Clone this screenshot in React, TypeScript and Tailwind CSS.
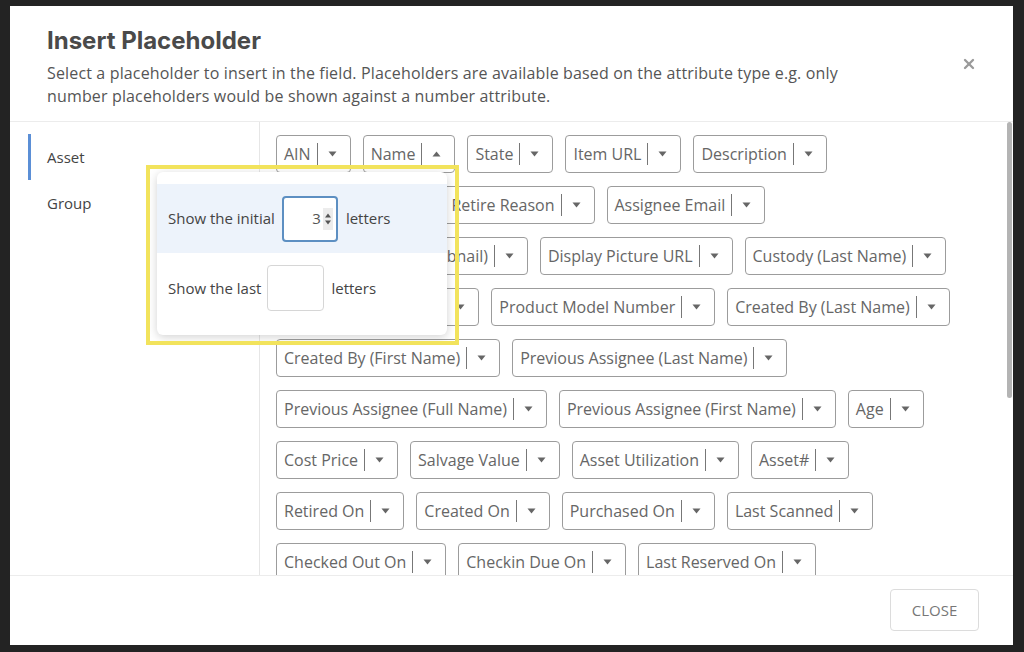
import { X } from 'lucide-react'

const rows: { label: string; open?: boolean }[][] = [
  [{ label: 'AIN' }, { label: 'Name', open: true }, { label: 'State' }, { label: 'Item URL' }, { label: 'Description' }],
  [{ label: 'Serial Number' }, { label: 'Retire Reason' }, { label: 'Assignee Email' }],
  [{ label: 'Display Picture (Thumbnail)' }, { label: 'Display Picture URL' }, { label: 'Custody (Last Name)' }],
  [{ label: 'Custody (First Name)' }, { label: 'Product Model Number' }, { label: 'Created By (Last Name)' }],
  [{ label: 'Created By (First Name)' }, { label: 'Previous Assignee (Last Name)' }],
  [{ label: 'Previous Assignee (Full Name)' }, { label: 'Previous Assignee (First Name)' }, { label: 'Age' }],
  [{ label: 'Cost Price' }, { label: 'Salvage Value' }, { label: 'Asset Utilization' }, { label: 'Asset#' }],
  [{ label: 'Retired On' }, { label: 'Created On' }, { label: 'Purchased On' }, { label: 'Last Scanned' }],
  [{ label: 'Checked Out On' }, { label: 'Checkin Due On' }, { label: 'Last Reserved On' }],
]

function Caret({ up }: { up?: boolean }) {
  return (
    <svg width="9" height="6" viewBox="0 0 9 6" className="ml-[10px]">
      {up ? <path d="M0.5 5.5 L4.5 0.5 L8.5 5.5 Z" fill="#666" /> : <path d="M0.5 0.5 L8.5 0.5 L4.5 5.5 Z" fill="#666" />}
    </svg>
  )
}

function Chip({ label, open }: { label: string; open?: boolean }) {
  return (
    <div className="flex h-[38px] shrink-0 items-center rounded-[4px] border border-[#9c9c9c] pl-[7px] pr-[13px] text-[16px] text-[#666]">
      <span>{label}</span>
      <span className="ml-[6px] h-[22px] w-px bg-[#777]" />
      <Caret up={open} />
    </div>
  )
}

export default function App() {
  return (
    <div className="h-[652px] w-[1024px] overflow-hidden bg-[#232323] pl-[10px] pt-[6px] font-['Open_Sans',sans-serif]">
      <div className="relative flex h-[639px] w-[1003px] flex-col bg-white">
        {/* Header */}
        <div className="h-[116px] shrink-0 border-b border-[#ececec] pl-[37px] pt-[20px]">
          <h1 className="font-['Inter',sans-serif] text-[24px] font-bold leading-[30px] text-[#4a4a4a]">Insert Placeholder</h1>
          <p className="mt-[6px] text-[16px] leading-[23px] tracking-[0.15px] text-[#555]">
            Select a placeholder to insert in the field. Placeholders are available based on the attribute type e.g. only
            <br />
            number placeholders would be shown against a number attribute.
          </p>
        </div>
        <button className="absolute left-[951px] top-[50px] text-[#9a9a9a]">
          <X size={16} strokeWidth={3.5} />
        </button>

        {/* Body */}
        <div className="flex h-[454px] shrink-0 border-b border-[#ececec]">
          <div className="w-[250px] shrink-0 border-r border-[#e6e6e6] pl-[18px] pt-[12px]">
            <div className="flex h-[46px] items-center border-l-[3px] border-[#5b8fd6] pl-[16px] text-[15px] text-[#444]">Asset</div>
            <div className="flex h-[46px] items-center pl-[19px] text-[15px] text-[#444]">Group</div>
          </div>
          <div className="relative flex-1 overflow-hidden pl-[16px] pt-[13px]">
            <div className="flex flex-col gap-[13px]">
              {rows.map((row, i) => (
                <div key={i} className="flex gap-[12px]">
                  {row.map((c) => (
                    <Chip key={c.label} label={c.label} open={c.open} />
                  ))}
                </div>
              ))}
            </div>
            <div className="absolute right-[1px] top-0 h-[276px] w-[5px] rounded-full bg-[#b4b4b4]" />
          </div>
        </div>

        {/* Footer */}
        <div className="flex flex-1 items-start justify-end pr-[34px] pt-[13px]">
          <button className="flex h-[42px] w-[89px] items-center justify-center rounded-[4px] border border-[#dcdcdc] text-[15px] text-[#777]">
            CLOSE
          </button>
        </div>

        {/* Popover */}
        <div className="absolute left-[147px] top-[166px] h-[163px] w-[290px] rounded-[6px] bg-white pt-[12px] shadow-[0_2px_10px_rgba(0,0,0,0.18)]">
          <div className="flex h-[69px] items-center bg-[#edf3fb] pl-[11px] text-[15px] text-[#444]">
            <span>Show the initial</span>
            <div className="ml-[7px] flex h-[46px] w-[56px] items-center justify-end rounded-[4px] border-2 border-[#5d8fc2] bg-white pr-[3px]">
              <span className="text-[15px] text-[#555]">3</span>
              <span className="ml-[2px] flex h-[22px] w-[10px] items-center justify-center bg-[#ececec]">
                <svg width="8" height="14" viewBox="0 0 8 14">
                  <path d="M1 5.5 L4 1.5 L7 5.5 Z" fill="#555" />
                  <path d="M1 8.5 L7 8.5 L4 12.5 Z" fill="#555" />
                </svg>
              </span>
            </div>
            <span className="ml-[8px]">letters</span>
          </div>
          <div className="flex h-[70px] items-center pl-[11px] text-[15px] text-[#444]">
            <span>Show the last</span>
            <div className="ml-[6px] h-[46px] w-[57px] rounded-[4px] border border-[#d6d6d6] bg-white" />
            <span className="ml-[7px]">letters</span>
          </div>
        </div>

        {/* Highlight */}
        <div className="pointer-events-none absolute left-[136px] top-[159px] h-[180px] w-[313px] border-[4px] border-[#f2e35c]" />
      </div>
    </div>
  )
}
